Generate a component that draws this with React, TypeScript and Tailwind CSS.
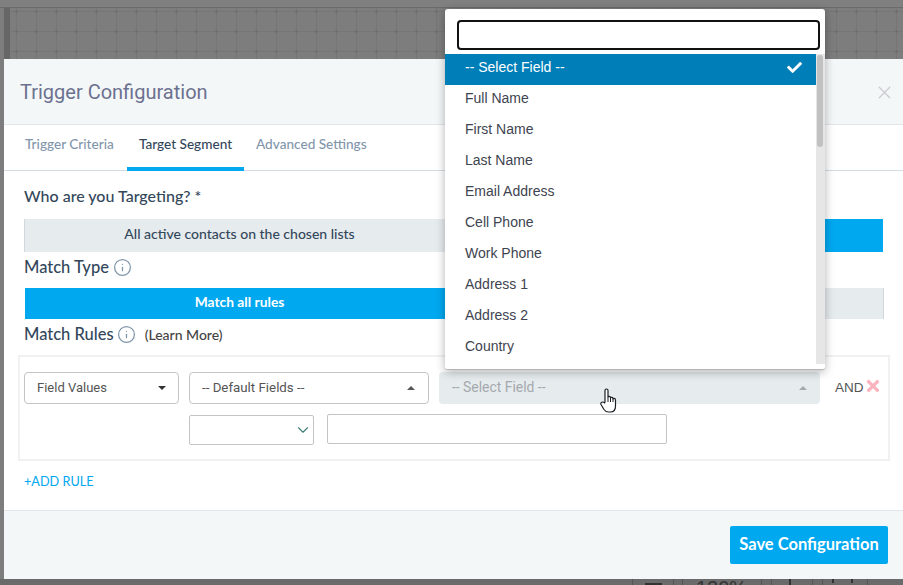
import { ChevronDown, Info, X } from "lucide-react";
import { FaCheck, FaTimes } from "react-icons/fa";

const fields = [
    "Full Name",
    "First Name",
    "Last Name",
    "Email Address",
    "Cell Phone",
    "Work Phone",
    "Address 1",
    "Address 2",
    "Country",
];

function Caret({ up, className }: { up?: boolean; className?: string }) {
    return (
        <svg width="8" height="4" viewBox="0 0 8 4" className={className}>
            <path d={up ? "M0 4 L4 0 L8 4 Z" : "M0 0 L4 4 L8 0 Z"} fill="currentColor" />
        </svg>
    );
}

function HandCursor() {
    return (
        <svg width="18" height="25" viewBox="0 0 18 25" className="absolute left-[600px] top-[388px]">
            <path
                d="M5 14 V2.5 C5 0.5 8 0.5 8 2.5 V9 C8 8 10.5 8 10.5 9.5 V10 C10.5 9 13 9 13 10.5 V11 C13 10 15.5 10 15.5 12 V18 C15.5 21 14 24 10.5 24 H8.5 C6 24 5 23 4 21.5 L1 16.5 C0 14.5 3 13 4.5 15 Z"
                fill="#fff"
                stroke="#1b1f24"
                strokeWidth="1.2"
                strokeLinejoin="round"
            />
            <path d="M8 9 V14 M10.5 10 V14 M13 11 V14" stroke="#1b1f24" strokeWidth="1" fill="none" />
        </svg>
    );
}

function Dropdown() {
    return (
        <div className="absolute left-[445px] top-[9px] w-[380px] h-[361px] bg-white rounded-[3px] border-b border-[#b5b5b5] shadow-[0_2px_10px_rgba(0,0,0,0.3)] overflow-hidden">
            <div className="pl-[12px] pr-[5px] pt-[11px] h-[45px]">
                <input className="block w-[363px] h-[30px] border-2 border-[#111] rounded-[4px] bg-white" />
            </div>
            <div className="flex h-[310px]">
                <ul className="w-[371px] text-[14px] text-[#3e4450] font-['Liberation_Sans',sans-serif]">
                    <li className="flex items-center justify-between h-[31px] pl-[20px] pr-[14px] pb-[4px] bg-[#007eb8] text-white">
                        <span>-- Select Field --</span>
                        <FaCheck size={15} />
                    </li>
                    {fields.map((field) => (
                        <li key={field} className="flex items-center h-[31px] pl-[20px] pb-[4px]">
                            {field}
                        </li>
                    ))}
                </ul>
                <div className="w-[9px] bg-[#e6e6e6]">
                    <div className="mt-[1px] h-[92px] w-[6px] ml-[1px] rounded-[3px] bg-[#c1c1c1]" />
                </div>
            </div>
        </div>
    );
}

export default function App() {
    return (
        <div className="relative w-[903px] h-[585px] overflow-hidden bg-[#7d7d7d] font-['Lato',sans-serif]">
            {/* Dimmed canvas behind the modal */}
            <div className="absolute left-0 top-0 w-full h-[8px] bg-[#808080] border-b border-[#6b6b6b]" />
            <div className="absolute left-[4px] top-[8px] w-[6px] h-[51px] bg-[#666]" />
            <div className="absolute left-[11px] top-[8px] right-0 h-[51px] bg-[radial-gradient(circle,#686868_1px,transparent_1.5px),linear-gradient(#767676_1px,transparent_1px),linear-gradient(90deg,#767676_1px,transparent_1px)] bg-[size:20px_20px] bg-[position:-4.5px_-6.5px,5px_3px,5px_3px]" />
            <div className="absolute left-0 bottom-0 w-full h-[6px] bg-[#6a6a6a] overflow-hidden">
                <span className="absolute left-[696px] top-[-3px] text-[20px] leading-[24px] text-[#333] font-['Liberation_Sans',sans-serif]">120%</span>
                <svg width="903" height="6" className="absolute left-0 top-0">
                    <path d="M632.5 0V6M673.5 0V6M682.5 0V6M761.5 0V6M771.5 0V6M812.5 0V6M822.5 0V6M867.5 0V6" stroke="#555" fill="none" />
                    <path d="M645 5H662M790 0V6M833 0V4M852 0V4" stroke="#333" strokeWidth="2" fill="none" />
                </svg>
            </div>

            {/* Modal */}
            <div className="absolute left-[4px] top-[59px] w-[899px] h-[520px] flex flex-col bg-white">
                <div className="flex items-center justify-between h-[66px] bg-[#f4f7f8] border-b border-[#e3e6e8] pl-[16px] pr-[8px]">
                    <h2 className="text-[20px] text-[#6c7190] font-['Roboto',sans-serif]">Trigger Configuration</h2>
                    <X size={21} strokeWidth={1.5} className="mt-[2px] text-[#c9cccf]" />
                </div>

                <div className="flex h-[46px] border-b border-[#d3dce4] text-[13.6px] font-medium text-[#8296ab]">
                    <div className="flex items-center w-[123px] pl-[21px] pb-[6px]">Trigger Criteria</div>
                    <div className="flex items-center justify-center w-[117px] text-[#33475b] border-b-[4px] border-[#00a8f0] pb-[3px] -mb-[1px]">
                        Target Segment
                    </div>
                    <div className="flex items-center px-[12px] pb-[6px]">Advanced Settings</div>
                </div>

                <div className="flex-1 pl-[20px] pr-[19px] text-[#33475b]">
                    <h3 className="mt-[13px] h-[35px] text-[16px] font-medium leading-[24px]">Who are you Targeting? *</h3>
                    <div className="flex h-[33px] w-[859px] text-[14px] font-medium">
                        <div className="flex-1 flex items-center justify-center pb-[5px] bg-[#e6ebee] border-l border-[#cfd8df]">
                            All active contacts on the chosen lists
                        </div>
                        <div className="flex-1 bg-[#00a8f0]" />
                    </div>
                    <div className="flex items-center gap-[4px] h-[36px] pb-[6px] text-[16.5px] font-medium">
                        Match Type
                        <Info size={19} strokeWidth={1.6} className="text-[#8296ab]" />
                    </div>
                    <div className="flex h-[31px] w-[859px] ml-[1px] text-[13.8px] font-bold">
                        <div className="flex-1 flex items-center justify-center pb-[3px] bg-[#00a8f0] text-white">
                            Match all rules
                        </div>
                        <div className="flex-1 bg-[#e6ebee] border-r border-[#cfd8df]" />
                    </div>
                    <div className="flex items-center h-[37px] pb-[6px] text-[16.5px] font-medium">
                        Match Rules
                        <Info size={19} strokeWidth={1.6} className="ml-[3px] text-[#8296ab]" />
                        <span className="ml-[9px] text-[14px] text-[#444]">(Learn More)</span>
                    </div>

                    {/* Rule box */}
                    <div className="-ml-[6px] -mt-[1px] w-[872px] h-[106px] border-2 border-[#f0f1f2] pl-[4px] pt-[15px] font-['Roboto',sans-serif] text-[13px]">
                        <div className="flex items-start">
                            <div className="flex items-center justify-between w-[155px] h-[32px] pb-[1px] border border-[#c4c4c4] rounded-[4px] pl-[12px] pr-[12px] text-[#555]">
                                Field Values
                                <Caret className="text-[#333]" />
                            </div>
                            <div className="flex items-center justify-between w-[240px] h-[32px] pb-[1px] ml-[10px] border border-[#c4c4c4] rounded-[4px] pl-[12px] pr-[13px] text-[13.3px] text-[#555]">
                                -- Default Fields --
                                <Caret up />
                            </div>
                            <div className="flex items-center justify-between w-[381px] h-[32px] pb-[1px] ml-[10px] bg-[#e6ebee] rounded-[4px] pl-[13px] pr-[13px] text-[13.9px] text-[#a5a9ad]">
                                -- Select Field --
                                <Caret up />
                            </div>
                            <span className="ml-[15px] mt-[6px] text-[13.5px] text-[#555] font-['Liberation_Sans',sans-serif]">AND</span>
                            <FaTimes size={18} className="mt-[5px] text-[#fbb3bd]" />
                        </div>
                        <div className="flex items-start ml-[165px] mt-[10px]">
                            <div className="flex items-center justify-end w-[125px] h-[30px] mt-[1px] border border-[#c4c4c4] rounded-[2px] pr-[1px]">
                                <ChevronDown size={18} strokeWidth={1.5} className="text-[#3f7f76]" />
                            </div>
                            <div className="w-[340px] h-[30px] ml-[13px] border border-[#c4c4c4] rounded-[2px]" />
                        </div>
                    </div>
                    <div className="mt-[11px] text-[12.7px] text-[#00a8f0]">+ADD RULE</div>
                </div>

                <div className="flex items-start justify-end h-[69px] bg-[#f4f7f8] border-t border-[#e3e6e8] pt-[15px] pr-[15px]">
                    <button className="w-[158px] h-[38px] pb-[2px] rounded-[2px] bg-[#00a8f0] text-white text-[16.5px] font-bold">
                        Save Configuration
                    </button>
                </div>
            </div>

            <Dropdown />
            <HandCursor />
        </div>
    );
}
